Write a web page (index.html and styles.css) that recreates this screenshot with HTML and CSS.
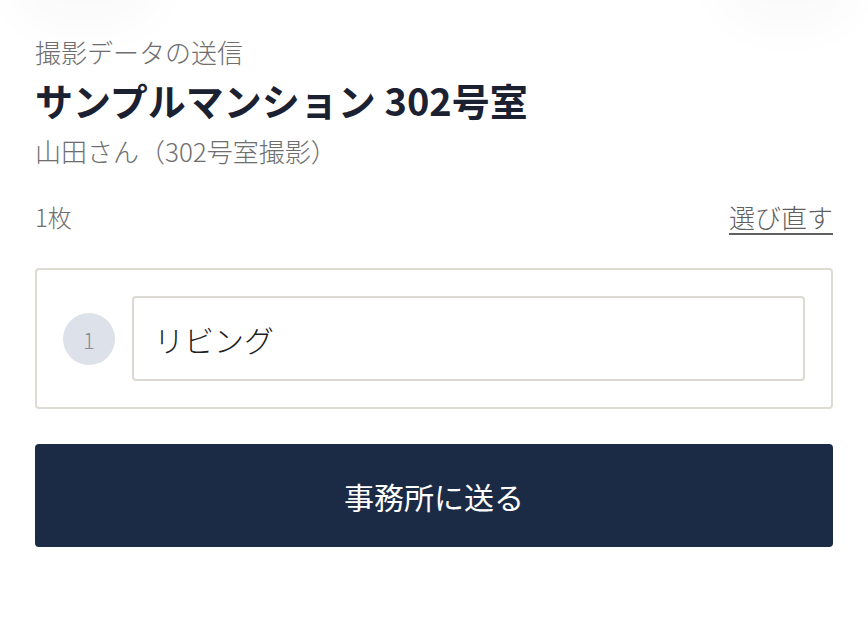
FILE: index.html
```html
<!DOCTYPE html>
<html lang="ja">
<head>
<meta charset="utf-8">
<link rel="stylesheet" href="styles.css">
</head>
<body>
<div class="page">
  <div class="glow glow-left"></div>
  <div class="glow glow-right"></div>
  <p class="eyebrow">撮影データの送信</p>
  <h1 class="title">サンプルマンション 302号室</h1>
  <p class="sub">山田さん（302号室撮影）</p>
  <div class="count-row">
    <span class="count">1枚</span>
    <a class="reselect" href="#">選び直す</a>
  </div>
  <div class="card">
    <div class="num">1</div>
    <div class="field">リビング</div>
  </div>
  <button class="send">事務所に送る</button>
</div>
</body>
</html>
```
FILE: styles.css
```css
html, body {
  margin: 0;
  padding: 0;
  background: #ffffff;
}
body {
  font-family: "Noto Sans CJK JP", "Noto Sans", sans-serif;
  width: 868px;
  height: 620px;
  overflow: hidden;
}
.page {
  position: relative;
  padding: 34px 35px 0 35px;
}
.glow {
  position: absolute;
  top: -50px;
  height: 80px;
  border-radius: 50%;
  background: rgba(0, 0, 0, 0.018);
  filter: blur(18px);
}
.glow-left { left: 10px; width: 150px; }
.glow-right { right: 10px; width: 140px; }
.eyebrow {
  margin: 0;
  font-size: 26px;
  line-height: 36px;
  font-weight: 300;
  color: #6e6e6e;
}
.title {
  margin: 5px 0 0 0;
  font-size: 38px;
  line-height: 50px;
  font-weight: 700;
  color: #1b2130;
}
.sub {
  margin: 8px 0 0 0;
  font-size: 26px;
  line-height: 36px;
  font-weight: 300;
  color: #6e6e6e;
}
.count-row {
  margin-top: 29px;
  display: flex;
  justify-content: space-between;
  align-items: center;
  height: 36px;
}
.count {
  font-size: 24px;
  font-weight: 300;
  color: #6e6e6e;
}
.reselect {
  font-size: 26px;
  font-weight: 300;
  color: #5f5f5f;
  text-decoration: underline;
  text-underline-offset: 5px;
  text-decoration-thickness: 2px;
}
.card {
  margin-top: 34px;
  border: 2px solid #dedad4;
  border-radius: 4px;
  padding: 26px;
  display: flex;
  align-items: center;
  gap: 17px;
}
.num {
  width: 52px;
  height: 52px;
  flex: none;
  border-radius: 50%;
  background: #dde1ea;
  color: #8a8d94;
  font-size: 22px;
  font-weight: 300;
  display: flex;
  align-items: center;
  justify-content: center;
}
.field {
  flex: 1;
  height: 81px;
  border: 2px solid #dcd9d4;
  border-radius: 4px;
  padding: 0 20px;
  display: flex;
  align-items: center;
  font-size: 30px;
  font-weight: 300;
  color: #1f1f1f;
}
.send {
  display: block;
  width: 100%;
  margin-top: 35px;
  height: 103px;
  border: none;
  border-radius: 4px;
  background: #1b2b45;
  color: #ffffff;
  font-family: "Noto Sans CJK JP", "Noto Sans", sans-serif;
  font-size: 30px;
}
```
